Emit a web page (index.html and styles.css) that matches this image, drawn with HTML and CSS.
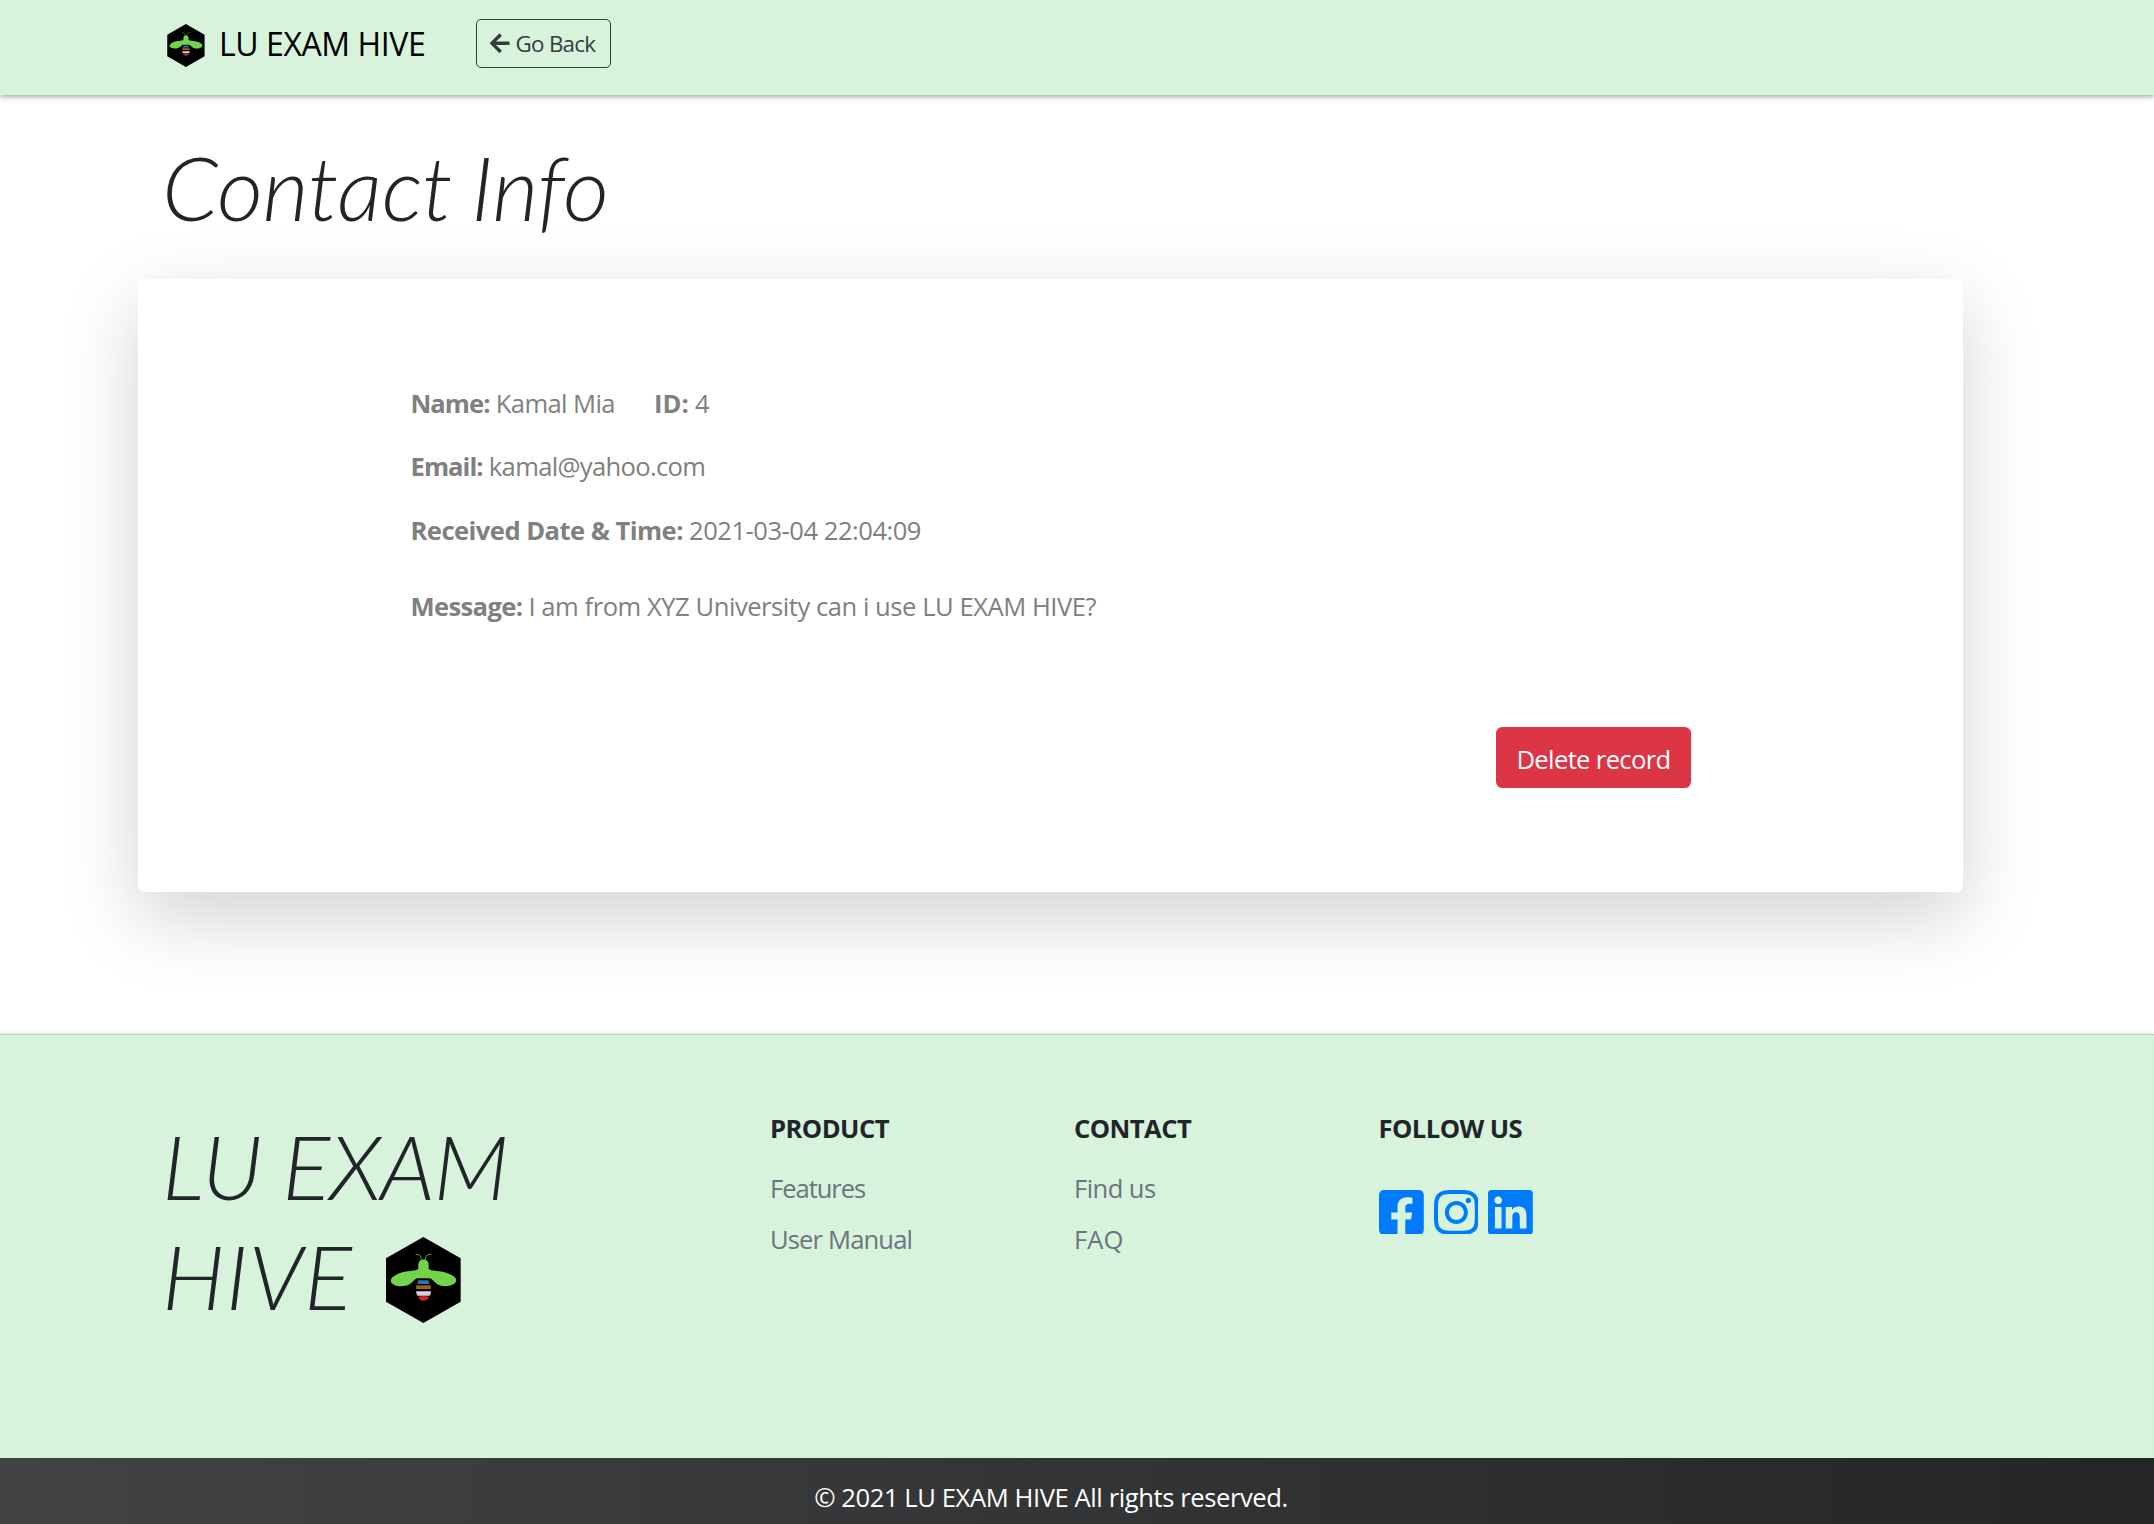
FILE: index.html
```html
<!DOCTYPE html>
<html lang="en">
<head>
<meta charset="utf-8">
<title>LU EXAM HIVE - Contact Info</title>
<link rel="stylesheet" href="styles.css">
</head>
<body>
<svg class="symbols" aria-hidden="true">
  <symbol id="bee" viewBox="47 36 225 258">
    <path fill="#000" d="M159 36 271 100V230L159 294 47 230V100Z"/>
    <path fill="none" stroke="#5fae40" stroke-width="2.6" d="M154 106Q151 92 148 90T136 88M164 106Q167 92 170 90T183 88"/>
    <path fill="#73d34d" d="M144 120C144 98 175 98 175 120V131C178 135 186 136 194 137C225 139 257 151 258 165C256 185 215 190 196 174C187 166 183 160 176 160H142C136 160 132 166 123 174C104 190 62 185 61 167C62 151 94 139 125 137C133 136 141 135 144 131Z"/>
    <path fill="#2b75b7" d="M144 166H174L177 177H141Z"/>
    <path fill="#a0600f" d="M138 181H181L182 192H137Z"/>
    <path fill="#d3d3d3" d="M137 199H182Q182 208 178 212H142Q138 208 137 199Z"/>
    <path fill="#d9232b" d="M143 216Q159 210 177 216Q170 227 159 227T143 216Z"/>
  </symbol>
</svg>

<header class="navbar">
  <a class="brand"><svg class="brand-logo"><use href="#bee"/></svg><span>LU EXAM HIVE</span></a>
  <a class="btn-back">
    <svg class="arrow" viewBox="0 0 448 512"><path fill="currentColor" d="M257.500 445.100l-22.200 22.200c-9.400 9.400-24.600 9.400-33.900 0L7 273c-9.400-9.400-9.400-24.600 0-33.900L201.400 44.700c9.400-9.400 24.600-9.400 33.900 0l22.200 22.200c9.500 9.500 9.300 25-.4 34.300L136.600 216H424c13.300 0 24 10.700 24 24v32c0 13.300-10.700 24-24 24H136.600l120.500 114.800c9.800 9.300 10 24.800.4 34.300z"/></svg>
    <span>Go Back</span>
  </a>
</header>

<main class="container">
  <h1 class="title">Contact Info</h1>
  <section class="card">
    <p class="row-name"><b class="l-name">Name:</b> <span class="v-name">Kamal Mia</span><b class="l-id">ID:</b> <span>4</span></p>
    <p class="row-mail"><b class="l-name">Email:</b> <span class="v-mail">kamal@yahoo.com</span></p>
    <p><b>Received Date &amp; Time:</b> <span>2021-03-04 22:04:09</span></p>
    <p class="message"><b class="l-message">Message:</b> <span class="v-message">I am from XYZ University can i use LU EXAM HIVE?</span></p>
    <button class="btn-delete">Delete record</button>
  </section>
</main>

<footer class="footer">
  <div class="footer-grid">
    <div class="footer-brand"><span class="wide">LU</span> EXAM<br><span class="wide">HIVE <svg class="footer-logo"><use href="#bee"/></svg></span></div>
    <div class="col">
      <h5>PRODUCT</h5>
      <a class="features">Features</a>
      <a>User Manual</a>
    </div>
    <div class="col">
      <h5>CONTACT</h5>
      <a class="find">Find us</a>
      <a class="faq">FAQ</a>
    </div>
    <div class="col">
      <h5>FOLLOW US</h5>
      <div class="social">
        <svg viewBox="0 32 448 448"><path d="M400 32H48A48 48 0 0 0 0 80v352a48 48 0 0 0 48 48h137.250V327.690h-63V256h63v-54.640c0-62.150 37-96.480 93.670-96.480 27.140 0 55.520 4.840 55.520 4.840v61h-31.270c-30.810 0-40.420 19.120-40.420 38.730V256h68.780l-11 71.690h-57.780V480H400a48 48 0 0 0 48-48V80a48 48 0 0 0-48-48z"/></svg>
        <svg viewBox="0 32 448 448"><path d="M224.100 141c-63.600 0-114.900 51.300-114.900 114.900s51.300 114.900 114.900 114.900S339 319.500 339 255.900 287.700 141 224.100 141zm0 189.600c-41.100 0-74.700-33.500-74.700-74.700s33.500-74.700 74.700-74.700 74.700 33.500 74.700 74.700-33.600 74.700-74.700 74.700zm146.400-194.300c0 14.900-12 26.800-26.800 26.800-14.900 0-26.800-12-26.800-26.800s12-26.800 26.800-26.800 26.800 12 26.800 26.800zm76.100 27.200c-1.700-35.900-9.900-67.700-36.200-93.900-26.200-26.200-58-34.400-93.900-36.200-37-2.100-147.900-2.100-184.900 0-35.800 1.700-67.600 9.900-93.900 36.100s-34.400 58-36.200 93.900c-2.100 37-2.100 147.900 0 184.900 1.700 35.900 9.900 67.700 36.200 93.900s58 34.400 93.900 36.200c37 2.100 147.900 2.100 184.900 0 35.900-1.700 67.700-9.900 93.900-36.200 26.200-26.200 34.400-58 36.200-93.900 2.100-37 2.100-147.800 0-184.800zM398.800 388c-7.800 19.600-22.900 34.700-42.600 42.600-29.500 11.700-99.500 9-132.100 9s-102.700 2.600-132.100-9c-19.600-7.800-34.700-22.900-42.600-42.600-11.700-29.500-9-99.500-9-132.100s-2.600-102.700 9-132.100c7.800-19.600 22.900-34.700 42.600-42.600 29.500-11.700 99.500-9 132.100-9s102.700-2.600 132.100 9c19.600 7.800 34.700 22.900 42.600 42.600 11.700 29.500 9 99.500 9 132.100s2.700 102.700-9 132.100z"/></svg>
        <svg viewBox="0 32 448 448"><path d="M416 32H31.900C14.300 32 0 46.500 0 64.300v383.400C0 465.500 14.300 480 31.900 480H416c17.600 0 32-14.500 32-32.300V64.300c0-17.800-14.400-32.300-32-32.300zM135.400 416H69V202.200h66.500V416zm-33.200-243c-21.300 0-38.500-17.300-38.500-38.500S80.900 96 102.200 96c21.200 0 38.500 17.300 38.500 38.500 0 21.300-17.200 38.500-38.500 38.500zm282.100 243h-66.400V312c0-24.800-.5-56.700-34.500-56.700-34.600 0-39.900 27-39.900 54.900V416h-66.400V202.200h63.700v29.200h.9c8.900-16.800 30.600-34.500 62.900-34.500 67.200 0 79.700 44.300 79.700 101.900V416z"/></svg>
      </div>
    </div>
  </div>
  <div class="copyright"><span>© 2021 LU EXAM HIVE All rights reserved.</span></div>
</footer>
</body>
</html>
```
FILE: styles.css
```css
* { box-sizing: border-box; }
html, body { height: 100%; }
body {
  margin: 0;
  display: flex;
  flex-direction: column;
  overflow: hidden;
  background: #fff;
  color: #212529;
  font: 400 25.6px/38.4px "Open Sans", "Noto Sans", sans-serif;
}
h1, h5, p { margin: 0; }
.symbols { display: none; }

.navbar {
  flex: none;
  display: flex;
  align-items: flex-start;
  height: 95px;
  padding: 19px 0 0 167px;
  background: #d8f3dc;
  box-shadow: 0 2px 5px rgba(0, 0, 0, .34);
}
.brand {
  display: flex;
  width: 309px;
  color: #000;
  font-size: 32px;
  line-height: 50px;
  letter-spacing: -.42px;
}
.brand-logo { width: 38px; height: 43px; margin: 4.5px 14px 0 0; }
.btn-back {
  display: flex;
  align-items: center;
  width: 135px;
  height: 49px;
  padding-left: 13px;
  border: 1.6px solid #343a40;
  border-radius: 5px;
  color: #343a40;
  font-size: 22.4px;
  line-height: 33.6px;
  letter-spacing: -.75px;
}
.btn-back span { padding-top: 1px; }
.arrow { width: 19.6px; height: 22.4px; margin-right: 6px; }

.container { flex: none; width: 1825px; height: 938.5px; margin-left: 138px; padding-top: 37.5px; }
.title {
  padding-left: 24px;
  font: italic 300 89.6px/107.5px Lato, sans-serif;
  letter-spacing: -.35px;
  word-spacing: -3.5px;
}
.card {
  display: flex;
  flex-direction: column;
  height: 612.5px;
  margin-top: 39px;
  padding: 106px 272px 0 272.5px;
  border-radius: 6.4px;
  background: #fff;
  box-shadow: 0 25.6px 76.8px rgba(0, 0, 0, .175);
  color: #808080;
  letter-spacing: -.5px;
}
.card p { margin-bottom: 25.3px; }
.card .row-name { margin-bottom: 24.6px; }
.card .row-mail { margin-bottom: 26px; }
.card b { letter-spacing: -.55px; }
.card .l-name { letter-spacing: -.95px; }
.card .l-message { letter-spacing: -.65px; }
.v-name { letter-spacing: -.61px; }
.v-mail { letter-spacing: -.67px; }
.v-message { letter-spacing: -.47px; }
.card .l-id { margin-left: 39px; letter-spacing: .1px; }
.card .message { margin: 12px 0 0; }
.btn-delete {
  align-self: flex-end;
  width: 195px;
  height: 61px;
  margin-top: 100.5px;
  padding: 5px 0 0;
  border: 0;
  border-radius: 6.4px;
  background: #dc3545;
  color: #fff;
  font: inherit;
  letter-spacing: -.65px;
}

.footer {
  position: relative;
  flex: 1;
  display: flex;
  flex-direction: column;
  background: #d8f3dc;
  box-shadow: 0 0 4px rgba(0, 0, 0, .2), inset 0 1px 1px rgba(0, 0, 0, .15);
}
.footer-grid {
  display: grid;
  grid-template-columns: 608px 304px 304.5px 304px;
  flex: none;
  height: 424.5px;
  padding: 77.5px 0 0 162px;
}
.footer-brand {
  font: italic 300 89.6px/110px Lato, sans-serif;
  letter-spacing: -1.3px;
  word-spacing: -2.5px;
}
.wide { letter-spacing: .9px; word-spacing: 0; }
.footer-logo { width: 75px; height: 86px; margin-left: 9px; vertical-align: -13px; }
.col { display: flex; flex-direction: column; color: #6c757d; letter-spacing: -.87px; }
.col h5 {
  margin: -1px 0 21.8px;
  color: #212529;
  font-size: 25.6px;
  font-weight: 700;
  letter-spacing: -.55px;
}
.col a { margin-bottom: 12.6px; }
.col .features { letter-spacing: -1.05px; }
.col .find { letter-spacing: -.56px; }
.col .faq { letter-spacing: 0; }
.social { display: flex; gap: 9.8px; padding: 19.3px 0 0 .5px; }
.social svg { width: 44.8px; height: 44.8px; fill: #007bff; }
.copyright {
  flex: 1;
  padding: 20.8px 52px 0 0;
  background: linear-gradient(to right, #414345, #232526);
  color: #fff;
  text-align: center;
  letter-spacing: -.42px;
}
```
